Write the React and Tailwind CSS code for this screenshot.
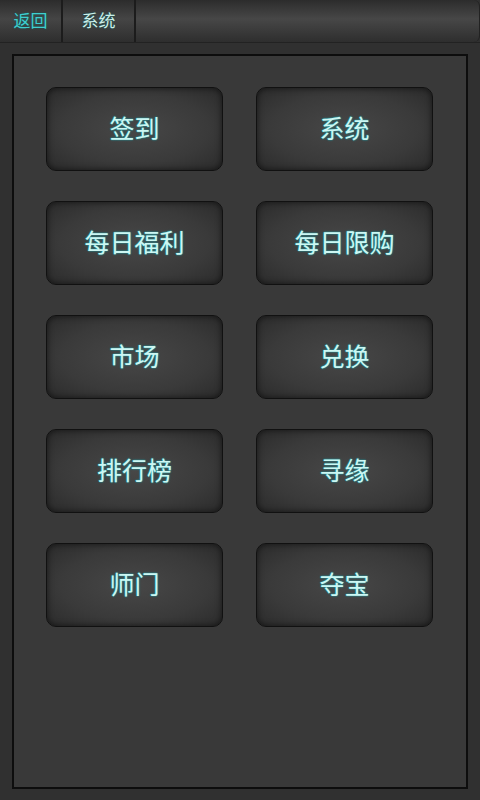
const ITEMS = ["签到", "系统", "每日福利", "每日限购", "市场", "兑换", "排行榜", "寻缘", "师门", "夺宝"];

const FONT = "font-['Liberation_Sans','Noto_Sans_CJK_SC',sans-serif]";

function Tab({ label, active, width }) {
  return (
    <div
      className={`${width} h-full flex items-center justify-center border-r-2 border-[#1c1c1c] bg-[linear-gradient(#2c2c2c,#454545_45%,#2e2e2e)] text-[17px] pt-[2px] ${
        active ? "text-[#3fcfcf]" : "text-[#cdeee8]"
      } [text-shadow:0_0_2px_#0b5f5f]`}
    >
      {label}
    </div>
  );
}

function MenuButton({ label }) {
  return (
    <button className="h-[84px] rounded-[10px] border border-[#111] bg-[radial-gradient(ellipse_at_center,#474747_0%,#3a3a3a_60%,#2b2b2b_100%)] shadow-[inset_0_0_6px_rgba(0,0,0,0.6)] text-[25px] pt-[2px] text-[#cdf6f2] [text-shadow:0_0_2px_#1b9fa8,0_0_1px_#1b9fa8]">
      {label}
    </button>
  );
}

export default function App() {
  return (
    <div className={`w-[480px] h-[800px] flex flex-col bg-[#303030] ${FONT}`}>
      <div className="h-[43px] flex border-b border-[#222]">
        <Tab label="返回" active width="w-[63px]" />
        <Tab label="系统" width="w-[73px]" />
        <div className="flex-1 rounded-r-[6px] bg-[linear-gradient(#2c2c2c,#474747_45%,#2e2e2e)] border-r border-[#222]" />
      </div>
      <div className="flex-1 mx-[12px] mt-[11px] mb-[11px] border-2 border-[#0d0d0d] bg-[#393939] pl-[32px] pt-[31px]">
        <div className="grid grid-cols-[177px_177px] gap-x-[33px] gap-y-[30px]">
          {ITEMS.map((label) => (
            <MenuButton key={label} label={label} />
          ))}
        </div>
      </div>
    </div>
  );
}
